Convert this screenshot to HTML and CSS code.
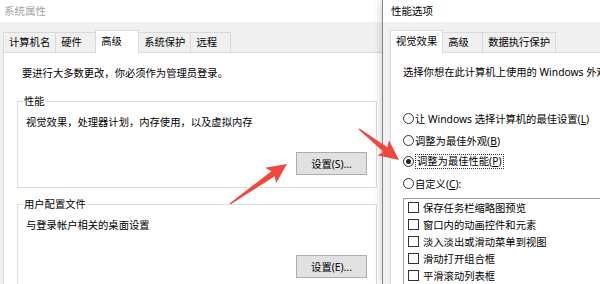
FILE: index.html
```html
<!DOCTYPE html>
<html lang="zh-CN">
<head>
    <meta charset="UTF-8">
    <title>系统属性 - 性能选项</title>
    <link rel="stylesheet" href="styles.css">
</head>
<body>
<div class="screen">

    <!-- left window: system properties -->
    <div class="win win-sys">
        <div class="titlebar inactive">系统属性</div>
        <div class="win-body">
            <div class="tabs">
                <div class="tab">计算机名</div>
                <div class="tab">硬件</div>
                <div class="tab active">高级</div>
                <div class="tab">系统保护</div>
                <div class="tab">远程</div>
            </div>
            <div class="page">
                <p class="note">要进行大多数更改，你必须作为管理员登录。</p>
                <fieldset class="group">
                    <legend>性能</legend>
                    <p>视觉效果，处理器计划，内存使用，以及虚拟内存</p>
                    <div class="btn-row"><button>设置(S)...</button></div>
                </fieldset>
                <fieldset class="group second">
                    <legend>用户配置文件</legend>
                    <p>与登录帐户相关的桌面设置</p>
                    <div class="btn-row"><button>设置(E)...</button></div>
                </fieldset>
            </div>
        </div>
    </div>

    <!-- right window: performance options -->
    <div class="win win-perf">
        <div class="titlebar">性能选项</div>
        <div class="win-body">
            <div class="tabs">
                <div class="tab active">视觉效果</div>
                <div class="tab">高级</div>
                <div class="tab">数据执行保护</div>
            </div>
            <div class="page">
                <p class="note">选择你想在此计算机上使用的 Windows 外观和性能的设置。</p>
                <div class="radios">
                    <div class="option"><span class="radio"></span><span>让 Windows 选择计算机的最佳设置(<u>L</u>)</span></div>
                    <div class="option"><span class="radio"></span><span>调整为最佳外观(<u>B</u>)</span></div>
                    <div class="option"><span class="radio checked"></span><span class="focus">调整为最佳性能(<u>P</u>)</span></div>
                    <div class="option"><span class="radio"></span><span>自定义(<u>C</u>):</span></div>
                </div>
                <div class="list">
                    <div class="item"><span class="check"></span>保存任务栏缩略图预览</div>
                    <div class="item"><span class="check"></span>窗口内的动画控件和元素</div>
                    <div class="item"><span class="check"></span>淡入淡出或滑动菜单到视图</div>
                    <div class="item"><span class="check"></span>滑动打开组合框</div>
                    <div class="item"><span class="check"></span>平滑滚动列表框</div>
                </div>
            </div>
        </div>
    </div>

    <!-- red annotation arrows -->
    <svg class="arrows" width="600" height="284" viewBox="0 0 600 284">
        <polygon transform="translate(230 204) rotate(-35.06)" points="0,-0.7 52.6,-3 49.6,-9.5 69.6,0 49.6,9.5 52.6,3 0,0.7"/>
        <polygon transform="translate(359 129) rotate(37.8)" points="0,-0.7 33.6,-3 30.6,-9.5 50.6,0 30.6,9.5 33.6,3 0,0.7"/>
    </svg>
</div>
</body>
</html>
```

FILE: styles.css
```css
* {
    box-sizing: border-box;
}

body {
    margin: 0;
    font-family: "Noto Sans", "Noto Sans CJK SC", sans-serif;
    font-size: 10.3px;
    color: #000;
    background: #f0f0f0;
}

.screen {
    position: relative;
    display: flex;
    width: 600px;
    height: 284px;
    overflow: hidden;
}

.win {
    display: flex;
    flex-direction: column;
    flex: none;
    background: #f0f0f0;
}

.win-sys {
    width: 382px;
    overflow: hidden;
}

.win-perf {
    width: 320px;
    border-left: 1px solid #858585;
    box-shadow: -3px 0 6px rgba(0, 0, 0, 0.12);
    position: relative;
    z-index: 1;
}

.titlebar {
    flex: none;
    height: 22px;
    line-height: 22px;
    padding-left: 4px;
    background: #fff;
    font-size: 10.5px;
    white-space: nowrap;
}

.win-perf .titlebar {
    padding-left: 8px;
}

.titlebar.inactive {
    color: #a3a3a3;
}

.win-body {
    flex: 1;
    display: flex;
    flex-direction: column;
    padding: 8px 0 0 3px;
}

.win-perf .win-body {
    padding-left: 7px;
}

.tabs {
    display: flex;
    align-items: flex-end;
    height: 22px;
    position: relative;
    z-index: 1;
}

.tab {
    height: 20px;
    min-width: 41px;
    padding: 0 5px;
    margin-right: -1px;
    border: 1px solid #d9d9d9;
    border-bottom: none;
    line-height: 19px;
    white-space: nowrap;
    background: #f0f0f0;
}

.tab.active {
    height: 23px;
    min-width: 44px;
    margin-bottom: -1px;
    line-height: 20px;
    background: #fff;
}

.page {
    flex: 1;
    width: 420px;
    padding: 13px 0 0 13px;
    background: #fff;
    border: 1px solid #d9d9d9;
}

.win-perf .page {
    padding: 12px 0 0 12px;
}

.note {
    margin: 0 0 14px 5px;
    line-height: 14px;
    white-space: nowrap;
}

.win-perf .note {
    margin: 0;
}

.group {
    width: 360px;
    margin: 0;
    padding: 0 9px 12px 5px;
    border: 1px solid #dcdcdc;
}

.group legend {
    padding: 0 1px;
    line-height: 14px;
}

.group p {
    margin: 7px 0 0 3px;
    line-height: 14px;
}

.group.second {
    margin-top: 9px;
}

.btn-row {
    display: flex;
    justify-content: flex-end;
    margin-top: 23px;
}

button {
    width: 71px;
    height: 23px;
    padding: 0;
    font: inherit;
    color: #000;
    background: #e1e1e1;
    border: 1px solid #adadad;
}

.radios {
    margin-top: 29px;
}

.option {
    display: flex;
    align-items: center;
    height: 21.5px;
    white-space: nowrap;
}

.radio {
    position: relative;
    flex: none;
    width: 11px;
    height: 11px;
    margin-right: 1px;
    border: 1px solid #333;
    border-radius: 50%;
    background: #fff;
}

.radio.checked::after {
    content: "";
    position: absolute;
    left: 2px;
    top: 2px;
    width: 5px;
    height: 5px;
    border-radius: 50%;
    background: #222;
}

.focus {
    padding: 0 1px;
    border: 1px dotted #333;
    line-height: 13px;
}

.list {
    width: 260px;
    height: 120px;
    margin-top: 4px;
    background: #fff;
    border: 1px solid #a0a0a0;
}

.item {
    display: flex;
    align-items: center;
    height: 17px;
    padding-left: 4px;
    white-space: nowrap;
}

.check {
    flex: none;
    width: 11px;
    height: 11px;
    margin-right: 4px;
    border: 1px solid #333;
    background: #fff;
}

.arrows {
    position: absolute;
    left: 0;
    top: 0;
    z-index: 2;
    pointer-events: none;
}

.arrows polygon {
    fill: #f0473f;
}
```
